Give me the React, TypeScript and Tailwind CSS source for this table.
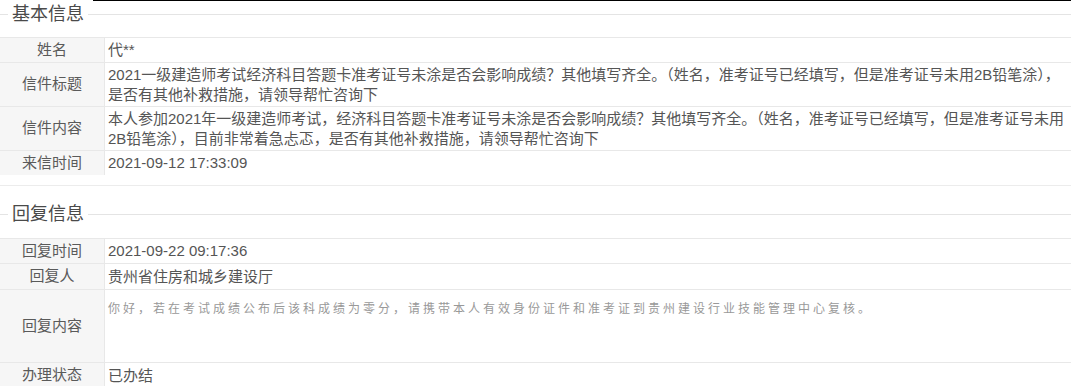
import React from "react";

type Row = { label: string; value: React.ReactNode; h: string };

function Legend({ title }: { title: string }) {
  return (
    <div className="flex h-[27px] items-center">
      <div className="h-px w-[8px] bg-[#e4e4e4]" />
      <div className="px-[4px] text-[18px] leading-[27px] text-[#4a4a4a]">{title}</div>
      <div className="h-px flex-1 bg-[#e4e4e4]" />
    </div>
  );
}

function Table({ rows }: { rows: Row[] }) {
  return (
    <div className="border-t border-[#e8e8e8]">
      {rows.map((r, i) => (
        <div key={i} className="flex border-b border-[#e8e8e8] last:border-b-0">
          <div className={`flex w-[105px] shrink-0 items-center justify-center border-r border-[#e8e8e8] bg-[#f6f6f6] text-[15px] text-[#5a5a5a] ${r.h}`}>
            {r.label}
          </div>
          <div className={`min-w-0 flex-1 overflow-hidden pl-[3px] text-[15px] text-[#555] ${r.h}`}>{r.value}</div>
        </div>
      ))}
    </div>
  );
}

export default function App() {
  const basic: Row[] = [
    { label: "姓名", value: <div className="leading-[24px]">代**</div>, h: "h-[24px]" },
    {
      label: "信件标题",
      value: (
        <div className="whitespace-nowrap pt-[2px] leading-[20px]">
          2021一级建造师考试经济科目答题卡准考证号未涂是否会影响成绩？其他填写齐全。（姓名，准考证号已经填写，但是准考证号未用2B铅笔涂），
          <br />
          是否有其他补救措施，请领导帮忙咨询下
        </div>
      ),
      h: "h-[43px]",
    },
    {
      label: "信件内容",
      value: (
        <div className="whitespace-nowrap pt-[2px] leading-[20px]">
          本人参加2021年一级建造师考试，经济科目答题卡准考证号未涂是否会影响成绩？其他填写齐全。（姓名，准考证号已经填写，但是准考证号未用
          <br />
          2B铅笔涂），目前非常着急忐忑，是否有其他补救措施，请领导帮忙咨询下
        </div>
      ),
      h: "h-[43px]",
    },
    { label: "来信时间", value: <div className="leading-[24px]">2021-09-12 17:33:09</div>, h: "h-[24px]" },
  ];

  const reply: Row[] = [
    { label: "回复时间", value: <div className="leading-[24px]">2021-09-22 09:17:36</div>, h: "h-[24px]" },
    { label: "回复人", value: <div className="leading-[25px]">贵州省住房和城乡建设厅</div>, h: "h-[25px]" },
    {
      label: "回复内容",
      value: (
        <div className="pt-[9px] text-[12px] leading-[20px] tracking-[3px] text-[#999]">
          你好，若在考试成绩公布后该科成绩为零分，请携带本人有效身份证件和准考证到贵州建设行业技能管理中心复核。
        </div>
      ),
      h: "h-[72px]",
    },
    { label: "办理状态", value: <div className="leading-[25px]">已办结</div>, h: "h-[25px]" },
  ];

  return (
    <div className="h-[386px] w-[1071px] overflow-hidden bg-white font-['Liberation_Sans','Noto_Sans_CJK_SC',sans-serif]">
      <div className="ml-[93px] h-px bg-black" />
      <Legend title="基本信息" />
      <div className="mt-[9px]">
        <Table rows={basic} />
      </div>
      <div className="mt-[10px] h-px bg-[#ececec]" />
      <div className="mt-[15px]">
        <Legend title="回复信息" />
      </div>
      <div className="mt-[10px]">
        <Table rows={reply} />
      </div>
    </div>
  );
}
